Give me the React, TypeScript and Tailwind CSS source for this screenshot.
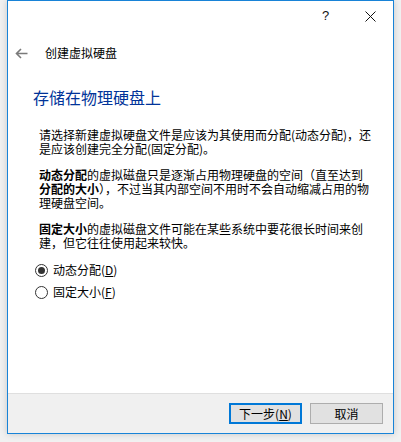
import React from "react";

const font = { fontFamily: '"Noto Sans CJK SC", "Noto Sans", sans-serif' };

function Radio({ checked, label, accel }: { checked: boolean; label: string; accel: string }) {
  return (
    <div className="flex h-[22px] items-center">
      <span className="flex h-[13px] w-[13px] items-center justify-center rounded-full border border-[#333333] bg-white">
        {checked && <span className="h-[7px] w-[7px] rounded-full bg-[#333333]" />}
      </span>
      <span className="ml-[5px] text-[12px] leading-[14px] text-black">
        {label}(<span className="underline">{accel}</span>)
      </span>
    </div>
  );
}

export default function App() {
  return (
    <div className="h-[442px] w-[401px] bg-[#f1f1f1] px-[7px] pb-[8px]" style={font}>
      <div className="flex h-[434px] flex-col border border-[#1883d7] bg-white shadow-[0_0_7px_rgba(0,0,0,0.18)]">
        {/* title bar */}
        <div className="flex h-[30px] justify-end">
          <div className="flex w-[45px] items-center justify-center text-[13px] text-[#111]" style={{ fontFamily: '"Liberation Sans", sans-serif' }}>
            ?
          </div>
          <div className="flex w-[45px] items-center justify-center">
            <svg width="11" height="11" viewBox="0 0 11 11">
              <path d="M0.5 0.5 L10.5 10.5 M10.5 0.5 L0.5 10.5" stroke="#111" strokeWidth="1" fill="none" />
            </svg>
          </div>
        </div>
        {/* back row */}
        <div className="flex h-[44px] items-center pl-[7px]">
          <svg width="13" height="11" viewBox="0 0 13 11">
            <path d="M12.5 5.5 H1.5 M6 1 L1.5 5.5 L6 10" stroke="#7a7a7a" strokeWidth="1.6" fill="none" />
          </svg>
          <span className="ml-[17px] text-[12px] leading-[14px] text-black">创建虚拟硬盘</span>
        </div>
        {/* heading */}
        <div className="mt-[12px] pl-[25px] text-[16px] leading-[20px] text-[#003399]">存储在物理硬盘上</div>
        {/* paragraphs */}
        <div className="mt-[21px] pl-[31px] text-[12px] leading-[14px] text-black whitespace-nowrap">
          <p className="mb-[12px]">
            请选择新建虚拟硬盘文件是应该为其使用而分配(动态分配)，还
            <br />
            是应该创建完全分配(固定分配)。
          </p>
          <p className="mb-[12px]">
            <b>动态分配</b>的虚拟磁盘只是逐渐占用物理硬盘的空间（直至达到
            <br />
            <b>分配的大小</b>），不过当其内部空间不用时不会自动缩减占用的物
            <br />
            理硬盘空间。
          </p>
          <p>
            <b>固定大小</b>的虚拟磁盘文件可能在某些系统中要花很长时间来创
            <br />
            建，但它往往使用起来较快。
          </p>
        </div>
        {/* radios */}
        <div className="mt-[9px] pl-[27px]">
          <Radio checked label="动态分配" accel="D" />
          <Radio checked={false} label="固定大小" accel="F" />
        </div>
        <div className="flex-1" />
        {/* footer */}
        <div className="flex h-[40px] justify-end gap-[8px] border-t border-[#dfdfdf] bg-[#f0f0f0] pr-[10px] pt-[9px]">
          <button className="flex h-[21px] w-[73px] items-center justify-center border-2 border-[#0078d7] bg-[#e1e1e1] text-[12px] leading-[14px] text-black">
            下一步(<span className="underline">N</span>)
          </button>
          <button className="flex h-[21px] w-[73px] items-center justify-center border border-[#adadad] bg-[#e1e1e1] text-[12px] leading-[14px] text-black">
            取消
          </button>
        </div>
      </div>
    </div>
  );
}
